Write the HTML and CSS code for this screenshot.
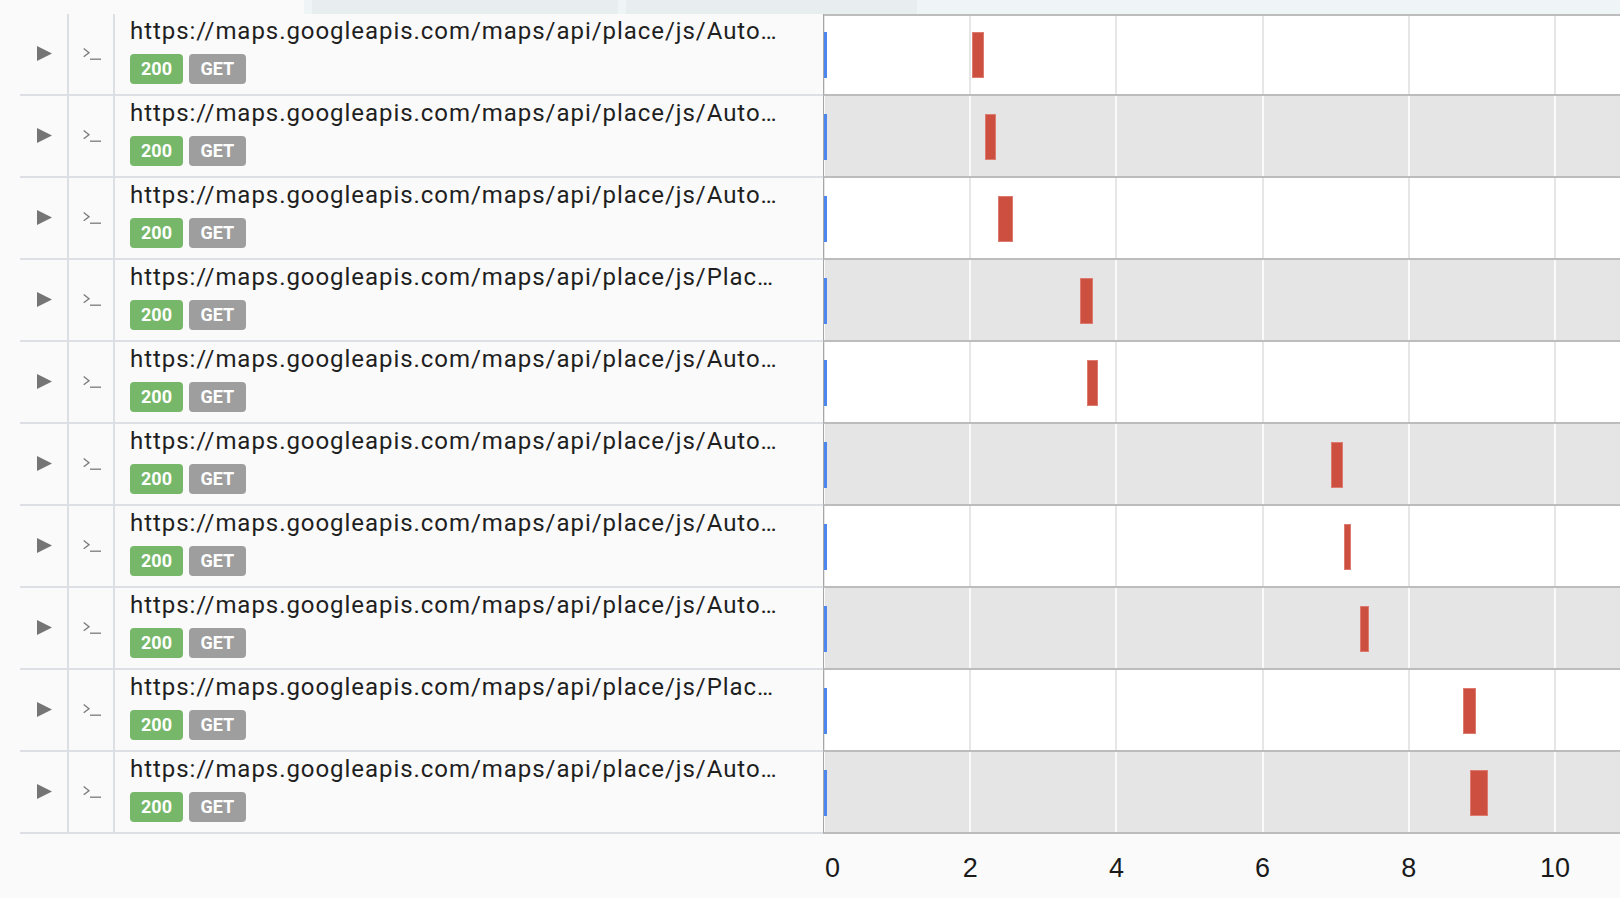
FILE: index.html
```html
<!DOCTYPE html>
<html lang="en">
<head>
<meta charset="utf-8">
<title>Network timeline</title>
<link rel="stylesheet" href="styles.css">
</head>
<body>
<div class="topstrip">
  <span class="seg seg-blank"></span>
  <span class="seg seg-light seg-edge"></span>
  <span class="seg seg-dark seg-a"></span>
  <span class="seg seg-light seg-edge"></span>
  <span class="seg seg-dark seg-b"></span>
  <span class="seg seg-light seg-rest"></span>
</div>

<div class="requests">
  <div class="row">
    <div class="cell expand"><svg class="tri" viewBox="0 0 15 15"><polygon points="0,0 15,7.5 0,15"/></svg></div>
    <div class="cell console"><svg class="prompt" viewBox="0 0 18 12"><polyline points="0.7,0.6 6,4.7 0.7,8.8"/><line x1="7" y1="11.2" x2="18" y2="11.2"/></svg></div>
    <div class="cell url"><div class="url-text">https://maps.googleapis.com/maps/api/place/js/Auto…</div><div class="badges"><span class="badge status">200</span><span class="badge method">GET</span></div></div>
    <div class="cell timeline"><span class="start"></span><span class="bar" style="left:148px;width:12px"></span></div>
  </div>
  <div class="row alt">
    <div class="cell expand"><svg class="tri" viewBox="0 0 15 15"><polygon points="0,0 15,7.5 0,15"/></svg></div>
    <div class="cell console"><svg class="prompt" viewBox="0 0 18 12"><polyline points="0.7,0.6 6,4.7 0.7,8.8"/><line x1="7" y1="11.2" x2="18" y2="11.2"/></svg></div>
    <div class="cell url"><div class="url-text">https://maps.googleapis.com/maps/api/place/js/Auto…</div><div class="badges"><span class="badge status">200</span><span class="badge method">GET</span></div></div>
    <div class="cell timeline"><span class="start"></span><span class="bar" style="left:161px;width:11px"></span></div>
  </div>
  <div class="row">
    <div class="cell expand"><svg class="tri" viewBox="0 0 15 15"><polygon points="0,0 15,7.5 0,15"/></svg></div>
    <div class="cell console"><svg class="prompt" viewBox="0 0 18 12"><polyline points="0.7,0.6 6,4.7 0.7,8.8"/><line x1="7" y1="11.2" x2="18" y2="11.2"/></svg></div>
    <div class="cell url"><div class="url-text">https://maps.googleapis.com/maps/api/place/js/Auto…</div><div class="badges"><span class="badge status">200</span><span class="badge method">GET</span></div></div>
    <div class="cell timeline"><span class="start"></span><span class="bar" style="left:174px;width:15px"></span></div>
  </div>
  <div class="row alt">
    <div class="cell expand"><svg class="tri" viewBox="0 0 15 15"><polygon points="0,0 15,7.5 0,15"/></svg></div>
    <div class="cell console"><svg class="prompt" viewBox="0 0 18 12"><polyline points="0.7,0.6 6,4.7 0.7,8.8"/><line x1="7" y1="11.2" x2="18" y2="11.2"/></svg></div>
    <div class="cell url"><div class="url-text">https://maps.googleapis.com/maps/api/place/js/Plac…</div><div class="badges"><span class="badge status">200</span><span class="badge method">GET</span></div></div>
    <div class="cell timeline"><span class="start"></span><span class="bar" style="left:256px;width:13px"></span></div>
  </div>
  <div class="row">
    <div class="cell expand"><svg class="tri" viewBox="0 0 15 15"><polygon points="0,0 15,7.5 0,15"/></svg></div>
    <div class="cell console"><svg class="prompt" viewBox="0 0 18 12"><polyline points="0.7,0.6 6,4.7 0.7,8.8"/><line x1="7" y1="11.2" x2="18" y2="11.2"/></svg></div>
    <div class="cell url"><div class="url-text">https://maps.googleapis.com/maps/api/place/js/Auto…</div><div class="badges"><span class="badge status">200</span><span class="badge method">GET</span></div></div>
    <div class="cell timeline"><span class="start"></span><span class="bar" style="left:263px;width:11px"></span></div>
  </div>
  <div class="row alt">
    <div class="cell expand"><svg class="tri" viewBox="0 0 15 15"><polygon points="0,0 15,7.5 0,15"/></svg></div>
    <div class="cell console"><svg class="prompt" viewBox="0 0 18 12"><polyline points="0.7,0.6 6,4.7 0.7,8.8"/><line x1="7" y1="11.2" x2="18" y2="11.2"/></svg></div>
    <div class="cell url"><div class="url-text">https://maps.googleapis.com/maps/api/place/js/Auto…</div><div class="badges"><span class="badge status">200</span><span class="badge method">GET</span></div></div>
    <div class="cell timeline"><span class="start"></span><span class="bar" style="left:507px;width:12px"></span></div>
  </div>
  <div class="row">
    <div class="cell expand"><svg class="tri" viewBox="0 0 15 15"><polygon points="0,0 15,7.5 0,15"/></svg></div>
    <div class="cell console"><svg class="prompt" viewBox="0 0 18 12"><polyline points="0.7,0.6 6,4.7 0.7,8.8"/><line x1="7" y1="11.2" x2="18" y2="11.2"/></svg></div>
    <div class="cell url"><div class="url-text">https://maps.googleapis.com/maps/api/place/js/Auto…</div><div class="badges"><span class="badge status">200</span><span class="badge method">GET</span></div></div>
    <div class="cell timeline"><span class="start"></span><span class="bar" style="left:520px;width:7px"></span></div>
  </div>
  <div class="row alt">
    <div class="cell expand"><svg class="tri" viewBox="0 0 15 15"><polygon points="0,0 15,7.5 0,15"/></svg></div>
    <div class="cell console"><svg class="prompt" viewBox="0 0 18 12"><polyline points="0.7,0.6 6,4.7 0.7,8.8"/><line x1="7" y1="11.2" x2="18" y2="11.2"/></svg></div>
    <div class="cell url"><div class="url-text">https://maps.googleapis.com/maps/api/place/js/Auto…</div><div class="badges"><span class="badge status">200</span><span class="badge method">GET</span></div></div>
    <div class="cell timeline"><span class="start"></span><span class="bar" style="left:536px;width:9px"></span></div>
  </div>
  <div class="row">
    <div class="cell expand"><svg class="tri" viewBox="0 0 15 15"><polygon points="0,0 15,7.5 0,15"/></svg></div>
    <div class="cell console"><svg class="prompt" viewBox="0 0 18 12"><polyline points="0.7,0.6 6,4.7 0.7,8.8"/><line x1="7" y1="11.2" x2="18" y2="11.2"/></svg></div>
    <div class="cell url"><div class="url-text">https://maps.googleapis.com/maps/api/place/js/Plac…</div><div class="badges"><span class="badge status">200</span><span class="badge method">GET</span></div></div>
    <div class="cell timeline"><span class="start"></span><span class="bar" style="left:639px;width:13px"></span></div>
  </div>
  <div class="row alt">
    <div class="cell expand"><svg class="tri" viewBox="0 0 15 15"><polygon points="0,0 15,7.5 0,15"/></svg></div>
    <div class="cell console"><svg class="prompt" viewBox="0 0 18 12"><polyline points="0.7,0.6 6,4.7 0.7,8.8"/><line x1="7" y1="11.2" x2="18" y2="11.2"/></svg></div>
    <div class="cell url"><div class="url-text">https://maps.googleapis.com/maps/api/place/js/Auto…</div><div class="badges"><span class="badge status">200</span><span class="badge method">GET</span></div></div>
    <div class="cell timeline"><span class="start"></span><span class="bar" style="left:646px;width:18px"></span></div>
  </div>
</div>

<div class="axis">
  <div class="axis-spacer"></div>
  <div class="axis-scale">
    <span class="tick first" style="left:1px">0</span>
    <span class="tick" style="left:146.2px">2</span>
    <span class="tick" style="left:292.4px">4</span>
    <span class="tick" style="left:438.6px">6</span>
    <span class="tick" style="left:584.8px">8</span>
    <span class="tick" style="left:731px">10</span>
  </div>
</div>
</body>
</html>
```

FILE: styles.css
```css
* { box-sizing: border-box; }

html, body {
  margin: 0;
  padding: 0;
  background: #fafafa;
  overflow: hidden;
}

body {
  width: 1620px;
  height: 898px;
  font-family: Roboto, "Liberation Sans", Arial, sans-serif;
  color: #202124;
}

/* top strip (partially scrolled header) */
.topstrip {
  display: flex;
  height: 14px;
}
.seg { display: block; height: 14px; }
.seg-blank { width: 304px; }
.seg-edge { width: 8px; }
.seg-light { background: #eff4f7; }
.seg-dark { background: #e8edf0; }
.seg-a { width: 306px; }
.seg-b { width: 291px; }
.seg-rest { flex: 1; }

/* request rows */
.requests {
  margin-left: 20px;
}

.row {
  display: grid;
  grid-template-columns: 49px 46px 708px 1fr;
  height: 82px;
}

.cell {
  height: 82px;
  border-bottom: 2px solid #dcdfe3;
}

.expand, .console {
  display: flex;
  align-items: center;
  justify-content: center;
  border-right: 2px solid #dcdfe3;
}

.tri {
  width: 15px;
  height: 15px;
  margin-left: 1px;
  margin-top: -1px;
  fill: #757575;
}

.prompt {
  width: 18px;
  height: 12px;
  margin-left: 1px;
  margin-top: -1px;
  fill: none;
  stroke: #7a7a7a;
  stroke-width: 1.3;
}

.url {
  display: flex;
  flex-direction: column;
  padding: 4px 0 0 15px;
  gap: 10px;
  min-width: 0;
}

.url-text {
  font-size: 24px;
  line-height: 26px;
  letter-spacing: 0.95px;
  color: #1f1f1f;
  white-space: nowrap;
  overflow: hidden;
  text-overflow: ellipsis;
}

.badges {
  display: flex;
  gap: 6px;
}

.badge {
  display: block;
  height: 30px;
  line-height: 30px;
  padding: 0 11px;
  border-radius: 4px;
  font-size: 18px;
  font-weight: 700;
  color: #fff;
}
.status { background: #76b76a; }
.method { background: #9e9e9e; padding: 0 11.5px; }

/* timeline */
.timeline {
  position: relative;
  border-left: 1px solid #a6a6a6;
  border-bottom: 2px solid #bcbcbc;
  background-color: #fff;
  background-image: repeating-linear-gradient(to right,
    #e6e6e6 0 1px, transparent 1px 145.2px, #e6e6e6 145.2px 146.2px);
}
.row.alt .timeline {
  background-color: #e5e5e5;
  background-image: repeating-linear-gradient(to right,
    #fafafa 0 1px, transparent 1px 145.2px, #fafafa 145.2px 146.2px);
}
.row:first-child .timeline {
  box-shadow: inset 0 2px 0 #bdbdbd;
}

.start {
  position: absolute;
  left: 0;
  top: 18px;
  width: 3px;
  height: 46px;
  background: #4e86ef;
}

.bar {
  position: absolute;
  top: 18px;
  height: 46px;
  background: #cc4f40;
  border: 1px solid #dc7c70;
}

/* axis */
.axis {
  display: grid;
  grid-template-columns: 824px 1fr;
  height: 64px;
}

.axis-scale {
  position: relative;
}

.tick {
  position: absolute;
  top: 21px;
  font-family: "Liberation Sans", Arial, sans-serif;
  font-size: 27px;
  line-height: 27px;
  color: #1a1a1a;
  transform: translateX(-50%);
}
.tick.first {
  transform: none;
}
```
